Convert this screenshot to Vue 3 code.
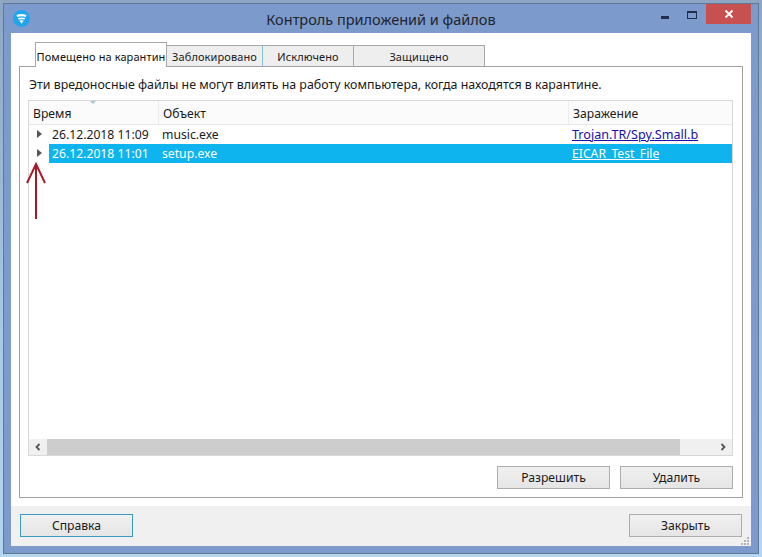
<script setup>
const tabs = [
  { id: 'quarantine', label: 'Помещено на карантин', width: 132 },
  { id: 'blocked', label: 'Заблокировано', width: 96 },
  { id: 'excluded', label: 'Исключено', width: 91 },
  { id: 'protected', label: 'Защищено', width: 131 },
];

const rows = [
  { time: '26.12.2018 11:09', object: 'music.exe', threat: 'Trojan.TR/Spy.Small.b' },
  { time: '26.12.2018 11:01', object: 'setup.exe', threat: 'EICAR_Test_File', selected: true },
];
</script>

<template>
  <div class="desktop">
    <div class="window">
      <header class="titlebar">
        <span class="app-icon">
          <svg width="11" height="11" viewBox="0 0 11 11">
            <path d="M0.5 2 Q5.5 0 10.5 2 L9.7 4 Q5.5 2.6 1.3 4 Z" fill="#fff" />
            <path d="M1.8 5 Q5.5 3.8 9.2 5 L8.4 6.6 Q5.5 5.8 2.6 6.6 Z" fill="#fff" />
            <path d="M3.3 7.5 Q5.5 7 7.7 7.5 L5.5 10.8 Z" fill="#fff" />
          </svg>
        </span>
        <span class="title">Контроль приложений и файлов</span>
        <div class="controls">
          <span class="ctl-min"></span>
          <span class="ctl-max"></span>
          <span class="ctl-close">
            <svg width="10" height="10" viewBox="0 0 10 10">
              <path d="M1.5 1.5 L8.5 8.5 M8.5 1.5 L1.5 8.5" stroke="#fff" stroke-width="1.8" />
            </svg>
          </span>
        </div>
      </header>

      <div class="client">
        <main class="content">
          <div class="tabs">
            <div
              v-for="(tab, i) in tabs"
              :key="tab.id"
              :class="['tab', { active: i === 0 }]"
              :style="{ width: tab.width + 'px' }"
            >{{ tab.label }}</div>
          </div>

          <section class="panel">
            <p class="hint">Эти вредоносные файлы не могут влиять на работу компьютера, когда находятся в карантине.</p>

            <div class="list">
              <div class="list-head">
                <div class="col col-time">Время<i class="sort-mark"></i></div>
                <div class="col col-object">Объект</div>
                <div class="col col-threat">Заражение</div>
              </div>

              <div class="list-body">
                <div v-for="row in rows" :key="row.time" class="row">
                  <span class="expander"></span>
                  <div :class="['cells', { selected: row.selected }]">
                    <span class="cell-time">{{ row.time }}</span>
                    <span class="cell-object">{{ row.object }}</span>
                    <a class="cell-threat" href="#">{{ row.threat }}</a>
                  </div>
                </div>
              </div>

              <div class="scrollbar">
                <span class="arrow">
                  <svg width="8" height="8" viewBox="0 0 8 8">
                    <path d="M5.5 1 L2.5 4 L5.5 7" fill="none" stroke="#555" stroke-width="1.8" />
                  </svg>
                </span>
                <span class="thumb"></span>
                <span class="arrow">
                  <svg width="8" height="8" viewBox="0 0 8 8">
                    <path d="M2.5 1 L5.5 4 L2.5 7" fill="none" stroke="#555" stroke-width="1.8" />
                  </svg>
                </span>
              </div>
            </div>

            <div class="actions">
              <button class="btn" type="button">Разрешить</button>
              <button class="btn" type="button">Удалить</button>
            </div>
          </section>
        </main>

        <footer class="footer">
          <button class="btn btn-focus" type="button">Справка</button>
          <button class="btn" type="button">Закрыть</button>
          <svg class="grip" width="9" height="9" viewBox="0 0 9 9">
            <path d="M6 0h2v2H6zM3 3h2v2H3zM6 3h2v2H6zM0 6h2v2H0zM3 6h2v2H3zM6 6h2v2H6z" fill="#b4b4b4" />
          </svg>
        </footer>
      </div>
    </div>

    <svg class="red-arrow" width="24" height="60" viewBox="0 0 24 60">
      <path d="M12 3 L12 58 M3 22 L12 3 L21 22" fill="none" stroke="#a81a28" stroke-width="2" />
    </svg>
  </div>
</template>

<style>
body {
  margin: 0;
}
</style>

<style scoped>
.desktop {
  position: relative;
  width: 762px;
  height: 557px;
  overflow: hidden;
  box-sizing: border-box;
  padding: 3px;
  background: linear-gradient(#8ea6c4, #a9c8e8 60%, #b5d6f0);
  font-family: 'Noto Sans', sans-serif;
  font-size: 12.2px;
  color: #1a1a1a;
}

.window {
  box-sizing: border-box;
  height: 100%;
  display: flex;
  flex-direction: column;
  padding: 0 7px 7px 7px;
  background: #7c9bcc;
  border: 1px solid #5f7896;
}

.titlebar {
  display: flex;
  align-items: flex-start;
  height: 29px;
  flex: none;
  position: relative;
}

.app-icon {
  width: 17px;
  height: 17px;
  margin: 6px 0 0 2px;
  border-radius: 50%;
  background: #22a5ee;
  display: flex;
  align-items: center;
  justify-content: center;
}

.title {
  position: absolute;
  left: 0;
  right: 0;
  top: 5px;
  text-align: center;
  font-size: 14.5px;
  line-height: 20px;
  color: #20242c;
}

.controls {
  margin-left: auto;
  display: flex;
  align-items: flex-start;
  position: relative;
}

.ctl-min {
  width: 8px;
  height: 3px;
  background: #20304a;
  margin: 12px 18px 0 0;
}

.ctl-max {
  box-sizing: border-box;
  width: 10px;
  height: 8px;
  border: 1px solid #20304a;
  border-top-width: 2px;
  margin: 7px 9px 0 0;
}

.ctl-close {
  width: 45px;
  height: 20px;
  background: #c75050;
  display: flex;
  align-items: center;
  justify-content: center;
}

.client {
  flex: 1;
  display: flex;
  flex-direction: column;
  background: #f0f0f0;
  position: relative;
}

.content {
  box-sizing: border-box;
  height: 473px;
  flex: none;
  padding: 9px 8px 0 8px;
  background: #fff;
}

.tabs {
  display: flex;
  height: 24px;
  padding-left: 16px;
  align-items: flex-end;
  position: relative;
  z-index: 1;
}

.tab {
  box-sizing: border-box;
  height: 21px;
  border: 1px solid #a8a8a8;
  border-left: none;
  border-bottom: none;
  background: #eeeeee;
  font-size: 11px;
  line-height: 22px;
  text-align: center;
  white-space: nowrap;
  letter-spacing: 0.1px;
}

.tab.active {
  height: 25px;
  margin-bottom: -1px;
  background: #fff;
  border-left: 1px solid #a8a8a8;
  line-height: 27px;
  color: #111;
}

.tab:nth-child(2) {
  border-right-color: #7fc4dc;
}

.panel {
  box-sizing: border-box;
  height: 432px;
  border: 1px solid #a0a0a0;
  padding: 8px 9px 0 8px;
  display: flex;
  flex-direction: column;
}

.hint {
  margin: 0 0 6px;
  font-size: 12.4px;
  line-height: 19px;
  padding-left: 1px;
  white-space: nowrap;
}

.list {
  box-sizing: border-box;
  height: 356px;
  flex: none;
  display: flex;
  flex-direction: column;
  border: 1px solid #d8d8d8;
}

.list-head {
  display: flex;
  height: 23px;
  flex: none;
  background: #fbfbfb;
  border-bottom: 1px solid #e8e8e8;
  line-height: 26px;
}

.col {
  box-sizing: border-box;
  padding-left: 4px;
  border-right: 1px solid #ececec;
  position: relative;
}

.col-time {
  width: 130px;
}

.col-object {
  width: 410px;
}

.col-threat {
  flex: 1;
  border-right: none;
}

.sort-mark {
  position: absolute;
  left: 61px;
  top: 0;
  width: 0;
  height: 0;
  border-left: 3px solid transparent;
  border-right: 3px solid transparent;
  border-top: 3px solid #a5c8d8;
}

.list-body {
  flex: 1;
}

.row {
  display: flex;
  height: 19px;
  line-height: 19px;
}

.expander {
  width: 20px;
  flex: none;
  position: relative;
}

.expander::before {
  content: '';
  position: absolute;
  left: 8px;
  top: 5px;
  border-left: 5px solid #555;
  border-top: 4px solid transparent;
  border-bottom: 4px solid transparent;
}

.cells {
  flex: 1;
  display: flex;
}

.cells.selected {
  background: #0db4ee;
  color: #fff;
}

.cell-time {
  width: 113px;
  padding-left: 3px;
  box-sizing: border-box;
  white-space: nowrap;
}

.cell-object {
  width: 410px;
  white-space: nowrap;
}

.cell-threat {
  color: #1a0dab;
  font-size: 12.6px;
  text-decoration: underline;
  white-space: nowrap;
}

.selected .cell-threat {
  color: #fff;
  font-size: 12.2px;
}

.scrollbar {
  display: flex;
  height: 16px;
  flex: none;
  background: #f0f0f0;
}

.arrow {
  width: 18px;
  flex: none;
  display: flex;
  align-items: center;
  justify-content: center;
}

.thumb {
  width: 633px;
  background: #cdcdcd;
}

.arrow:last-child {
  margin-left: auto;
}

.actions {
  display: flex;
  justify-content: flex-end;
  gap: 10px;
  margin-top: 10px;
}

.btn {
  box-sizing: border-box;
  width: 113px;
  height: 23px;
  padding: 0;
  border: 1px solid #adadad;
  background: linear-gradient(#f0f0f0, #e5e5e5);
  font-family: inherit;
  font-size: 12.2px;
  color: #1a1a1a;
}

.btn-focus {
  border-color: #3c9bc4;
}

.footer {
  display: flex;
  justify-content: space-between;
  padding: 8px 9px 0 9px;
}

.grip {
  position: absolute;
  right: 1px;
  bottom: 0;
}

.red-arrow {
  position: absolute;
  left: 24px;
  top: 161px;
}
</style>
